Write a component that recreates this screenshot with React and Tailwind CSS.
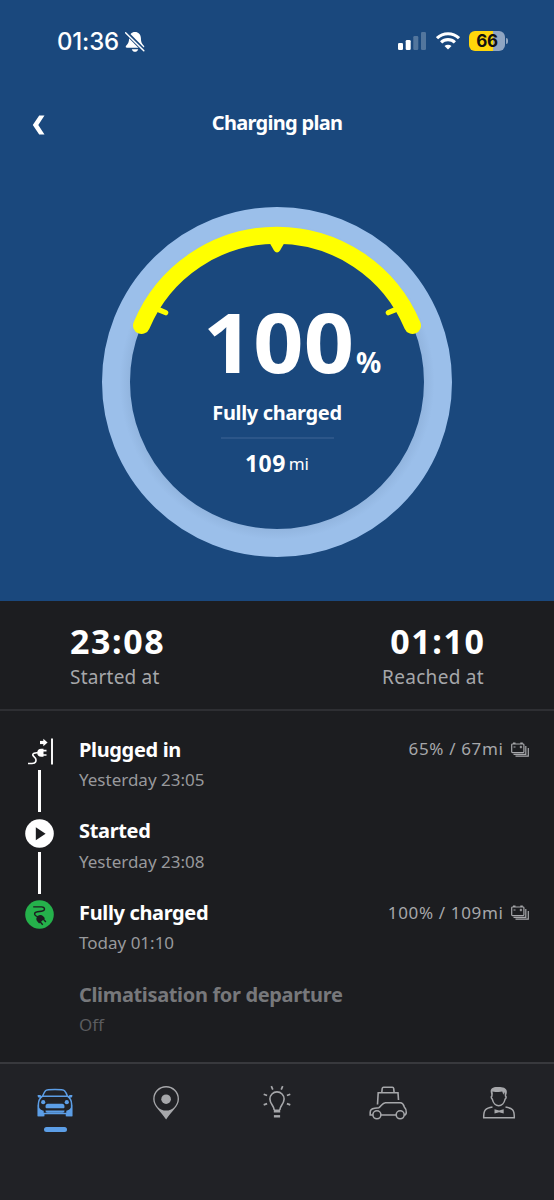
import React from 'react';

const steps = [
  { title: 'Plugged in', time: 'Yesterday 23:05', level: '65% / 67mi', icon: 'plug', line: true },
  { title: 'Started', time: 'Yesterday 23:08', icon: 'play', line: true },
  { title: 'Fully charged', time: 'Today 01:10', level: '100% / 109mi', icon: 'charged' },
  { title: 'Climatisation for departure', time: 'Off', muted: true },
];

const PlugIcon = () => (
  <svg width="29" height="29" viewBox="0 0 29 29" fill="none" stroke="#fff">
    <path d="M27 1.5v26" strokeWidth="1.9" />
    <path d="M15 5.5h4" strokeWidth="3.2" />
    <path d="M18.3 1.800l4.300 3.700-4.300 3.700z" fill="#fff" stroke="none" />
    <path d="M18.500 11.800v8h-2.300c-2.400 0-4-1.600-4-4s1.600-4 4-4z" fill="#fff" stroke="none" />
    <path d="M17.500 13.600h4M17.500 18h4" strokeWidth="1.700" />
    <path d="M12.8 15.8c-3.200-.2-5.200.5-5 2.200.3 1.700 3.300 2.400 3.200 5 0 2.600-1.800 3.500-4 3.500H3" strokeWidth="1.6" />
  </svg>
);

const PlayIcon = () => (
  <svg width="29" height="29" viewBox="0 0 29 29">
    <circle cx="14.500" cy="14.500" r="14.300" fill="#fff" />
    <path d="M10.800 8.200v13l9.800-6.500z" fill="#1c1d20" />
  </svg>
);

const ChargedIcon = () => (
  <svg width="29" height="29" viewBox="0 0 29 29">
    <circle cx="14.500" cy="14.500" r="14.300" fill="#25b14b" />
    <path d="M8.200 6.900h8.300c2 0 3 .8 3 2.200s-1.100 2-3 2.200l-4 .4c-2 .3-3 1.200-2.900 2.500.1 1.200 1.300 1.900 3.200 2.600" fill="none" stroke="#1c1d20" strokeWidth="1.400" />
    <g transform="translate(15.300 18.900) rotate(48)">
      <path d="M2.600-3.900v7.800H0c-2.300 0-3.900-1.600-3.900-3.900S-2.300-3.900 0-3.900z" fill="#1c1d20" />
      <path d="M2-2.100h4M2 2.100h4" stroke="#1c1d20" strokeWidth="1.400" />
    </g>
  </svg>
);

const BatteryIcon = () => (
  <svg width="18" height="15" viewBox="0 0 18 15" fill="none" stroke="#a6a7aa" strokeWidth="1.200">
    <rect x=".7" y="2" width="12.200" height="8.600" rx=".8" />
    <path d="M2 1.200h2.500M9.300 1.200h2.500" strokeWidth="1.600" />
    <path d="M2.500 5h2M8.700 5h2.400M9.900 3.800v2.400" />
    <path d="M2.500 12.300h12.300V4M4.500 14.200h12.800V6" />
  </svg>
);

const stepIcons = { plug: PlugIcon, play: PlayIcon, charged: ChargedIcon };

const CarIcon = () => (
  <svg width="40" height="40" viewBox="0 0 40 40" fill="none" stroke="#5c9ee6" strokeWidth="1.500">
    <path d="M7.500 14.200c1-2.500 2-4.500 3-5.500 1.700-1.600 17.300-1.600 19 0 1.200 1.200 2.200 3.300 3 5.500z" />
    <path d="M7.500 14.200C4.500 16.500 3.400 19 3.400 22v11.500h5.300v-2h22.800v2h5.100V22c0-3-1.100-5.500-4.100-7.800" />
    <path d="M2.600 13h2.700l1.900 1.700-1.300 1.400-3-.9zM37.400 13h-2.700l-1.900 1.700 1.300 1.400 3-.9z" fill="#5c9ee6" stroke="none" />
    <circle cx="8.200" cy="20.200" r="2.100" fill="#5c9ee6" stroke="none" />
    <circle cx="31.800" cy="20.200" r="2.100" fill="#5c9ee6" stroke="none" />
    <path d="M10.500 24.700c0-1.900.8-2.900 2.400-2.900h14.200c1.600 0 2.400 1 2.400 2.900 0 1-.5 1.500-1.500 1.500H12c-1 0-1.500-.5-1.500-1.500z" fill="#5c9ee6" stroke="none" />
    <path d="M2.700 22.500c1.500 4.300 3.200 5.700 6 6.200v5.600h-6zM37.300 22.500c-1.500 4.300-3.200 5.700-6 6.200v5.600h6z" fill="#5c9ee6" stroke="none" />
    <path d="M10.500 28.600h19c0 1.600-.7 2.200-2 2.200h-15c-1.300 0-2-.6-2-2.200z" fill="#5c9ee6" stroke="none" />
  </svg>
);

const PinIcon = () => (
  <svg width="40" height="40" viewBox="0 0 40 40">
    <path fillRule="evenodd" d="M20.100 4a12.800 12.800 0 0 0-12.900 12.900c0 7.500 8 12.600 12.900 20.600 4.900-8 12.900-13.100 12.900-20.600A12.800 12.800 0 0 0 20.100 4zm0 1.500a11.500 11.500 0 0 1 0 23 11.500 11.500 0 0 1 0-23z" fill="#a6a7aa" />
    <circle cx="20.100" cy="17.200" r="4.800" fill="#a6a7aa" />
  </svg>
);

const BulbIcon = () => (
  <svg width="40" height="40" viewBox="0 0 40 40" fill="none" stroke="#a6a7aa" strokeWidth="1.600">
    <path d="M17.200 28c0-4.200-4.300-6-4.300-11a7.100 7.100 0 0 1 14.200 0c0 5-4.300 6.800-4.300 11" />
    <path d="M16.800 29h6.400" strokeWidth="3" />
    <path d="M16.900 34.300h6.200" strokeWidth="2.400" />
    <path d="M14.300 4.200l1.500 3.400M25.700 4.200l-1.500 3.400M6.700 12.200l3.400 1.300M33.300 12.200l-3.400 1.300M6.700 22.900l3.400-1.300M33.300 22.900l-3.400-1.300" strokeWidth="1.700" />
  </svg>
);

const TripIcon = () => (
  <svg width="40" height="40" viewBox="0 0 40 40" fill="none" stroke="#a6a7aa" strokeWidth="1.600">
    <path d="M13.800 10.500l.4-4c.1-.8.500-1.200 1.300-1.200h8.900c.8 0 1.200.4 1.300 1.200l.4 4" />
    <path d="M9.500 22.500l.7-11.700h19.800l.5 7.200" />
    <path d="M4.900 33H2.200v-2.500c0-2.700 1.500-3.800 4.500-4.200l4.200-.6c2.400-1.600 3.500-4.700 6.600-4.900l14.800-.1c3 .1 3.300 2 4 4.300 1.500 1.500 2.200 3 2 5.600-.2 1.700-.6 2.400-2.100 2.400M12.900 33h15.300" />
    <circle cx="8.900" cy="32.800" r="4" />
    <circle cx="32.200" cy="32.800" r="4" />
  </svg>
);

const PersonIcon = () => (
  <svg width="40" height="40" viewBox="0 0 40 40" fill="none" stroke="#a6a7aa" strokeWidth="1.500">
    <path d="M13 10.500l-.1 3.500c-.9.500-.8 2.200.4 3.200.8 3.800 3.600 6.500 6.400 6.500s5.600-2.700 6.400-6.500c1.200-1 1.300-2.700.4-3.200l-.1-3.500" />
    <path d="M11.800 10.500C11 6.500 14 5.200 18 5.100c5-.2 9.300.4 9.800 4.200.1 1.600-.2 2.800-.9 4-.6-1.500-1-2.600-1.500-3.100l-1 2.600-1.200-3.200c-3 .8-6.600.3-9.700-.2l-.3 3.300c-.7-.6-1.300-1.200-1.400-2.200z" fill="#a6a7aa" stroke="none" />
    <path d="M13.500 25.100c-6.700 1.200-9 2.500-8.800 10.700h30.600c.2-8.200-2.100-9.500-8.800-10.700" />
    <path d="M15.500 27.300l4.600 1.300 4.600-1.300v4.200l-4.600-1.200-4.600 1.200z" fill="#a6a7aa" stroke="none" />
  </svg>
);

const tabs = [CarIcon, PinIcon, BulbIcon, TripIcon, PersonIcon];

const StatusBar = () => (
  <div className="flex h-[82px] items-center justify-between pl-[57px] pr-[46px] font-['Inter',sans-serif]">
    <div className="flex items-center gap-[5px] pt-px">
      <span className="w-[63px] whitespace-nowrap text-2xl font-medium leading-6 tracking-[-0.2px]">01:36</span>
      <svg width="20" height="22" viewBox="0 0 20 22" fill="#fff">
        <path d="M10 1C6.500 1 4.300 3.500 4.100 7c-.1 4.500-1 5.500-3 7.700-.8 1-.3 2 .9 2h16c1.200 0 1.700-1 .9-2-2-2.200-2.900-3.200-3-7.700C15.700 3.500 13.500 1 10 1zM6.800 18.200h6.400c-.3 1.500-1.600 2.600-3.200 2.600s-2.900-1.100-3.200-2.600z" />
        <path d="M1 1.500l18 18" stroke="#1a487d" strokeWidth="4" />
        <path d="M.6 1.800l18.200 18" stroke="#fff" strokeWidth="1.500" strokeLinecap="round" />
      </svg>
    </div>
    <div className="flex items-center">
      <svg className="mr-[10px]" width="28" height="18" viewBox="0 0 28 18" fill="#fff">
        <rect y="11" width="5" height="7" rx="1.300" />
        <rect x="7.700" y="8" width="5" height="10" rx="1.300" />
        <rect x="15.300" y="4" width="5" height="14" rx="1.300" opacity=".25" />
        <rect x="23" y="0" width="5" height="18" rx="1.300" opacity=".25" />
      </svg>
      <svg className="mr-[9px]" width="24" height="18" viewBox="0 0 24 18" fill="none" stroke="#fff" strokeWidth="3.100">
        <path d="M1 6.200a15.700 15.700 0 0 1 22 0" />
        <path d="M5.100 10.400a9.900 9.900 0 0 1 13.800 0" />
        <path d="M12 17.600l-3.500-3.500a5 5 0 0 1 7 0z" fill="#fff" stroke="none" />
      </svg>
      <div className="flex h-5 w-9 items-center justify-center rounded-[6px] bg-[linear-gradient(to_right,#ffd60a_68%,#8fa5c2_68%)] text-[17px] font-bold leading-5 tracking-[-0.3px] text-[#111]">
        66
      </div>
      <div className="ml-px h-[6px] w-[2px] rounded-r-full bg-[#8fa5c2]" />
    </div>
  </div>
);

const Gauge = () => (
  <div className="grid h-[350px] w-[350px] place-items-center">
    <svg className="col-start-1 row-start-1" width="350" height="350" viewBox="0 0 350 350" fill="none">
      <defs>
        <radialGradient id="ring" cx="175" cy="175" r="175" gradientUnits="userSpaceOnUse">
          <stop offset=".84" stopColor="#92b5df" />
          <stop offset=".9" stopColor="#9bbfea" />
        </radialGradient>
      </defs>
      <circle cx="175" cy="175" r="161" stroke="url(#ring)" strokeWidth="28" />
      <path d="M39.500 118.500a146.800 146.800 0 0 1 271 0" stroke="#ff0" strokeWidth="17" strokeLinecap="round" />
      <path d="M55 102l8.700 3.700M295 102l-8.700 3.700" stroke="#ff0" strokeWidth="5.200" strokeLinecap="round" />
      <path d="M166.500 34h17l-5.500 9.500c-1.700 2.600-4.300 2.600-6 0z" fill="#ff0" />
    </svg>
    <div className="col-start-1 row-start-1 flex h-full w-full flex-col items-center pt-[94px]">
      <div className="ml-[34px] flex h-20 w-[182px] items-baseline whitespace-nowrap leading-[80px]">
        <span className="w-[153px] origin-left scale-x-[1.06] text-[83px] font-bold">100</span>
        <span className="text-[28px] font-bold tracking-normal">%</span>
      </div>
      <div className="mt-[17px] text-xl font-bold leading-[30px] tracking-[-0.33px]">Fully charged</div>
      <div className="mt-[9px] h-[2px] w-[113px] bg-[#2c5689]" />
      <div className="mt-2 flex items-baseline gap-[3px] leading-8">
        <span className="text-[23px] font-bold tracking-[0.4px]">109</span>
        <span className="-translate-y-[2.5px] text-[17px]">mi</span>
      </div>
    </div>
  </div>
);

const App = () => {
  return (
    <div className="flex h-[1200px] w-[554px] flex-col overflow-hidden bg-[#1c1d20] font-['Noto_Sans',sans-serif] text-white">
      <div className="flex h-[601px] shrink-0 flex-col bg-[#1a487d]">
        <StatusBar />
        <div className="grid h-[82px] grid-cols-[80px_1fr_80px] items-center">
          <button className="pl-8 pt-[3px]">
            <svg width="13" height="20" viewBox="0 0 13 20" fill="#fff">
              <path d="M7.200.5h5.300L6.300 10l6.200 9.500H7.200L.8 10z" />
            </svg>
          </button>
          <h1 className="text-center text-xl font-bold leading-8 tracking-[-0.7px]">Charging plan</h1>
        </div>
        <div className="mt-[43px] flex justify-center">
          <Gauge />
        </div>
      </div>

      <div className="flex h-[110px] shrink-0 justify-between border-b-2 border-[#2e2f33] px-[70px] pt-[18px]">
        <div>
          <p className="text-[34px] font-bold leading-[44px] tracking-[1.6px]">23:08</p>
          <p className="mt-px text-[19px] leading-[27px] tracking-[0.2px] text-[#a6a7aa]">Started at</p>
        </div>
        <div className="text-right">
          <p className="-mr-[1.5px] text-[34px] font-bold leading-[44px] tracking-[1.6px]">01:10</p>
          <p className="mt-px text-[19px] leading-[27px] tracking-[0.3px] text-[#a6a7aa]">Reached at</p>
        </div>
      </div>

      <div className="h-[351px] shrink-0 pl-[25px] pr-[25px] pt-6">
        {steps.map((step) => {
          const Icon = stepIcons[step.icon];
          return (
            <div key={step.title} className="flex h-[81.700px] items-start">
              <div className="flex w-[29px] flex-col items-center gap-1 pt-[2px]">
                {Icon && <Icon />}
                {step.line && <div className="h-[42px] w-[3px] bg-white" />}
              </div>
              <div className="-mt-[0.5px] ml-[25px]">
                <h2 className={`whitespace-nowrap text-xl font-bold leading-[30px] tracking-[-0.35px] ${step.muted ? 'text-[#77787b]' : ''}`}>
                  {step.title}
                </h2>
                <p className={`mt-[3.5px] text-[17px] leading-6 ${step.muted ? 'text-[#5b5c5f]' : 'text-[#98999c]'}`}>
                  {step.time}
                </p>
              </div>
              {step.level && (
                <div className="ml-auto flex h-7 items-center gap-[7.500px] text-[17px] tracking-[0.65px] text-[#a6a7aa]">
                  <span>{step.level}</span>
                  <BatteryIcon />
                </div>
              )}
            </div>
          );
        })}
      </div>

      <nav className="grid flex-1 grid-cols-5 border-t-2 border-[#38393d] bg-[#212226] pt-[18px]">
        {tabs.map((Icon, i) => (
          <button key={i} className="flex flex-col items-center gap-[5px]">
            <Icon />
            {i === 0 && <span className="h-[4.500px] w-[23px] rounded-full bg-[#5c9ee6]" />}
          </button>
        ))}
      </nav>
    </div>
  );
};

export default App;
